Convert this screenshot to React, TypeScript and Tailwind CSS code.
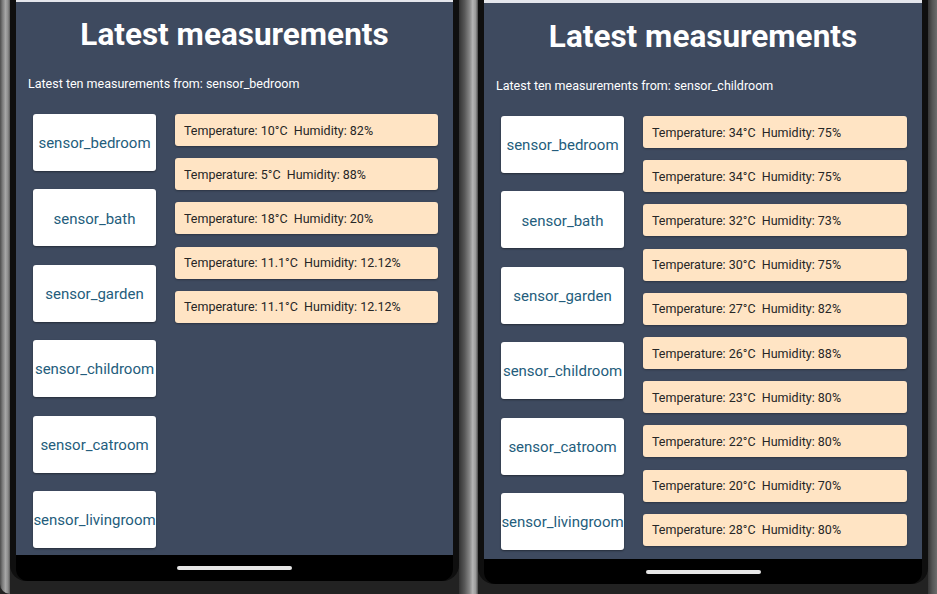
const SENSORS = [
  "sensor_bedroom",
  "sensor_bath",
  "sensor_garden",
  "sensor_childroom",
  "sensor_catroom",
  "sensor_livingroom",
];

// [temperature, humidity]
const BEDROOM: [string, string][] = [
  ["10", "82"],
  ["5", "88"],
  ["18", "20"],
  ["11.1", "12.12"],
  ["11.1", "12.12"],
];

const CHILDROOM: [string, string][] = [
  ["34", "75"],
  ["34", "75"],
  ["32", "73"],
  ["30", "75"],
  ["27", "82"],
  ["26", "88"],
  ["23", "80"],
  ["22", "80"],
  ["20", "70"],
  ["28", "80"],
];

type PhoneProps = {
  sensor: string;
  readings: [string, string][];
  rimClass: string;
  screenClass: string;
  stripClass: string;
  titleClass: string;
};

function Phone({ sensor, readings, rimClass, screenClass, stripClass, titleClass }: PhoneProps) {
  return (
    <div className={`flex flex-col rounded-b-[16px] bg-[#0f0f0f] px-[6px] ${rimClass}`}>
      <div className={`flex flex-col overflow-hidden bg-[#3e4a5f] ${screenClass}`}>
        <div className={`bg-[#e4e6ec] ${stripClass}`} />

        {/* Header */}
        <h1 className={`text-center text-[31.5px] font-bold leading-[36px] text-white ${titleClass}`}>
          Latest measurements
        </h1>
        <p className="mt-[24px] pl-[12px] text-[12.5px] leading-[14px] text-white">
          Latest ten measurements from: {sensor}
        </p>

        {/* Body */}
        <div className="mt-[23px] flex gap-[19px] pl-[17px] pr-[15px]">
          <div className="flex w-[123px] shrink-0 flex-col gap-[18.4px]">
            {SENSORS.map((name) => (
              <div
                key={name}
                className="flex h-[57px] items-center justify-center overflow-hidden whitespace-nowrap rounded-[3px] bg-white pt-[2px] text-[15px] text-[#245d7c] shadow-[0_1px_2px_rgba(0,0,0,0.4)]"
              >
                {name}
              </div>
            ))}
          </div>
          <div className="flex flex-1 flex-col gap-[12.2px]">
            {readings.map(([temp, hum], idx) => (
              <div
                key={idx}
                className="flex h-[32px] items-center whitespace-pre rounded-[3px] bg-[#ffe4c4] pl-[9px] pt-[2px] text-[12.5px] text-[#262626] shadow-[0_1px_2px_rgba(0,0,0,0.3)]"
              >
                {`Temperature: ${temp}°C  Humidity: ${hum}%`}
              </div>
            ))}
          </div>
        </div>
      </div>

      {/* Nav bar */}
      <div className="flex flex-1 justify-center rounded-b-[12px] bg-black pt-[11px]">
        <div className="h-[4px] w-[115px] rounded-full bg-[#e6e6e6]" />
      </div>
    </div>
  );
}

export default function App() {
  return (
    <div className="flex h-[594px] w-[937px] overflow-hidden bg-[#222222] font-['Roboto',sans-serif]">
      <div className="h-full w-[10px] rounded-bl-[14px] bg-[linear-gradient(to_right,#4d4d4d,#7b7b7b_25%,#a6a6a6_55%,#8c8c8c_80%,#5a5a5a)]" />
      <Phone
        sensor="sensor_bedroom"
        readings={BEDROOM}
        rimClass="h-[581px]"
        screenClass="h-[555px] w-[437px]"
        stripClass="h-[2px]"
        titleClass="pt-[15px]"
      />
      <div className="h-full w-[19px] bg-[linear-gradient(to_right,#333333,#595959_30%,#858585_55%,#b6b6b6_72%,#9a9a9a_88%,#4a4a4a)]" />
      <Phone
        sensor="sensor_childroom"
        readings={CHILDROOM}
        rimClass="h-[584px]"
        screenClass="h-[559px] w-[438px]"
        stripClass="h-[3px]"
        titleClass="pt-[16px]"
      />
      <div className="h-full w-[9px] bg-[linear-gradient(to_right,#363636,#565656_50%,#6c6c6c)]" />
    </div>
  );
}
